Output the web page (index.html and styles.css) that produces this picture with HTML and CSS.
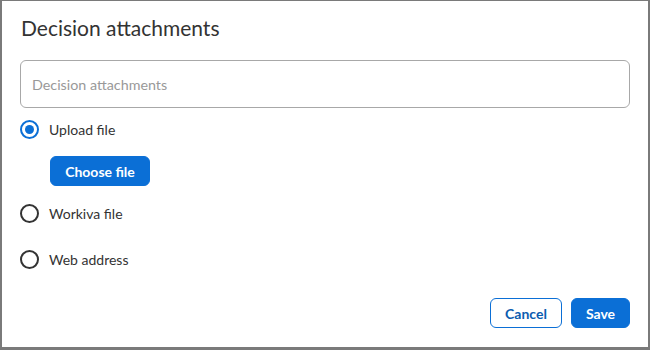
FILE: index.html
```html
<!DOCTYPE html>
<html>
<head>
<meta charset="utf-8">
<link rel="stylesheet" href="styles.css">
</head>
<body>
<div class="dialog">
  <h1 class="title">Decision attachments</h1>
  <div class="input"><span class="placeholder">Decision attachments</span></div>
  <div class="options">
    <label class="radio-row row1"><span class="radio checked"></span><span class="label">Upload file</span></label>
    <div class="choose-wrap"><button class="btn primary choose">Choose file</button></div>
    <label class="radio-row row2"><span class="radio"></span><span class="label">Workiva file</span></label>
    <label class="radio-row row3"><span class="radio"></span><span class="label">Web address</span></label>
  </div>
  <div class="footer">
    <button class="btn secondary cancel">Cancel</button>
    <button class="btn primary save">Save</button>
  </div>
</div>
</body>
</html>
```
FILE: styles.css
```css
html, body {
  margin: 0;
  padding: 0;
}
body {
  width: 650px;
  height: 350px;
  background: #7a7a7a;
  font-family: Lato, "Liberation Sans", sans-serif;
  overflow: hidden;
}
.dialog {
  box-sizing: border-box;
  margin: 1px 2px 0 2px;
  width: 646px;
  height: 346px;
  background: #fff;
  padding: 12px 18px 0 18px;
  display: flex;
  flex-direction: column;
}
.title {
  margin: 0;
  font-size: 21px;
  line-height: 28px;
  font-weight: 400;
  color: #333;
  padding: 1px 0 0 1px;
}
.input {
  margin-top: 18px;
  height: 48px;
  box-sizing: border-box;
  border: 1px solid #a8a8a8;
  border-radius: 6px;
  display: flex;
  align-items: center;
  padding-left: 11px;
}
.placeholder {
  font-size: 14.3px;
  color: #999;
}
.options {
  display: flex;
  flex-direction: column;
}
.radio-row {
  display: flex;
  align-items: center;
  height: 24px;
  gap: 10px;
}
.row1 { margin-top: 9px; }
.row2 { margin-top: 15px; }
.row3 { margin-top: 22px; }
.radio {
  box-sizing: border-box;
  width: 19px;
  height: 19px;
  border: 2px solid #333;
  border-radius: 50%;
  display: flex;
  align-items: center;
  justify-content: center;
}
.radio.checked {
  border-color: #0b6fd6;
}
.radio.checked::after {
  content: "";
  width: 9px;
  height: 9px;
  border-radius: 50%;
  background: #0b6fd6;
}
.label {
  font-size: 14px;
  color: #333;
}
.choose-wrap {
  margin-top: 15px;
  padding-left: 30px;
  display: flex;
}
.btn {
  font-family: Lato, "Liberation Sans", sans-serif;
  font-weight: 700;
  font-size: 14px;
  height: 30px;
  border-radius: 6px;
  box-sizing: border-box;
  cursor: pointer;
}
.primary {
  background: #0b6fd6;
  color: #fff;
  border: 1px solid #0b6fd6;
}
.secondary {
  background: #fff;
  color: #0b5cb0;
  border: 1px solid #0b6fd6;
}
.choose {
  width: 100px;
  padding: 0;
}
.footer {
  margin-top: 27px;
  display: flex;
  justify-content: flex-end;
  gap: 9px;
}
.cancel { width: 72px; padding: 0; }
.save { width: 59px; padding: 0; }
```
